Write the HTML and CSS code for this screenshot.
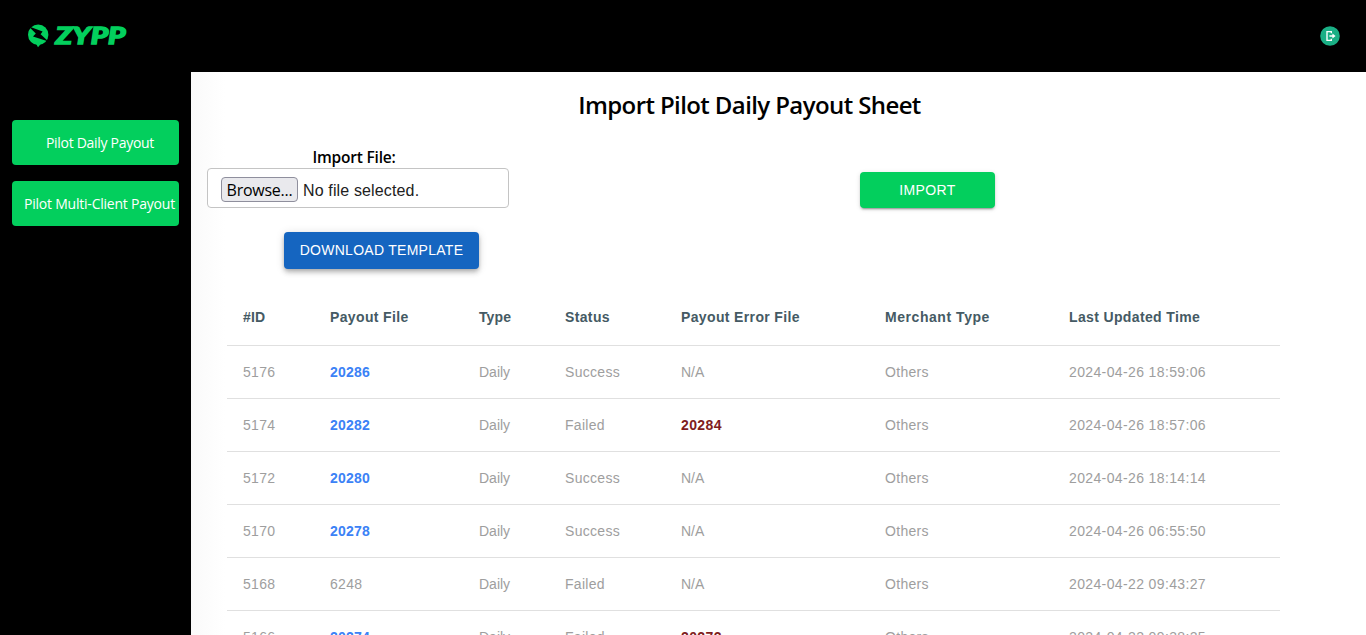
FILE: index.html
```html
<!DOCTYPE html>
<html lang="en">
<head>
<meta charset="utf-8">
<title>Import Pilot Daily Payout Sheet</title>
<link rel="stylesheet" href="styles.css">
</head>
<body>
<header class="topbar">
  <svg class="logo" width="102" height="28" viewBox="0 0 102 28" role="img" aria-label="ZYPP">
    <circle cx="11.2" cy="12.7" r="10.2" fill="#03cf5d"/>
    <path fill="#03cf5d" d="M6.5 20.5h8.5L11 25.3 9.2 22z"/>
    <path fill="#000" d="M1.5 4.2L15.6 9.4 13.6 12.2 21.5 19.6 6 14.6 8.8 11.4z"/>
    <text class="wordmark" x="28.6" y="22" textLength="70" lengthAdjust="spacingAndGlyphs">ZYPP</text>
  </svg>
  <svg class="logout" width="20" height="20" viewBox="0 0 20 20" aria-label="Log out">
    <circle cx="10" cy="10" r="9.8" fill="#1aaf85"/>
    <path d="M11.3 7.2V5.6H7v8.8h4.3v-1.6" fill="none" stroke="#fff" stroke-width="1.4"/>
    <path d="M9.4 9.3h3V7.4l3.2 2.6-3.2 2.6v-1.9h-3z" fill="#fff"/>
  </svg>
</header>
<div class="shell">
  <nav class="sidebar">
    <a class="nav-item"><span class="nav-daily">Pilot Daily Payout</span></a>
    <a class="nav-item"><span class="nav-multi">Pilot Multi-Client Payout</span></a>
  </nav>
  <main class="content">
    <h1 class="title">Import Pilot Daily Payout Sheet</h1>
    <section class="form">
      <div class="field">
        <label class="field-label">Import File:</label>
        <div class="file-input"><span class="browse">Browse...</span><span class="file-name">No file selected.</span></div>
      </div>
      <button class="btn import">IMPORT</button>
    </section>
    <button class="btn download">DOWNLOAD TEMPLATE</button>
    <table class="payouts">
      <colgroup><col class="c-id"><col class="c-file"><col class="c-type"><col class="c-status"><col class="c-error"><col class="c-merchant"><col class="c-time"></colgroup>
      <thead><tr><th class="tight">#ID</th><th>Payout File</th><th class="tight">Type</th><th>Status</th><th>Payout Error File</th><th class="wide">Merchant Type</th><th>Last Updated Time</th></tr></thead>
      <tbody>
        <tr><td>5176</td><td><a class="link">20286</a></td><td class="tight">Daily</td><td>Success</td><td class="tight">N/A</td><td>Others</td><td>2024-04-26 18:59:06</td></tr>
        <tr><td>5174</td><td><a class="link">20282</a></td><td class="tight">Daily</td><td>Failed</td><td><a class="error">20284</a></td><td>Others</td><td>2024-04-26 18:57:06</td></tr>
        <tr><td>5172</td><td><a class="link">20280</a></td><td class="tight">Daily</td><td>Success</td><td class="tight">N/A</td><td>Others</td><td>2024-04-26 18:14:14</td></tr>
        <tr><td>5170</td><td><a class="link">20278</a></td><td class="tight">Daily</td><td>Success</td><td class="tight">N/A</td><td>Others</td><td>2024-04-26 06:55:50</td></tr>
        <tr><td>5168</td><td>6248</td><td class="tight">Daily</td><td>Failed</td><td class="tight">N/A</td><td>Others</td><td>2024-04-22 09:43:27</td></tr>
        <tr><td>5166</td><td><a class="link">20274</a></td><td class="tight">Daily</td><td>Failed</td><td><a class="error">20272</a></td><td>Others</td><td>2024-04-22 09:38:25</td></tr>
      </tbody>
    </table>
  </main>
</div>
</body>
</html>
```

FILE: styles.css
```css
* { box-sizing: border-box; }
body {
  margin: 0;
  height: 635px;
  overflow: hidden;
  display: flex;
  flex-direction: column;
  background: #fff;
  font-family: "Open Sans", "Noto Sans", sans-serif;
}
.topbar {
  flex: none;
  height: 72px;
  padding: 0 26px 0 27px;
  display: flex;
  align-items: center;
  justify-content: space-between;
  background: #000;
}
.logo { overflow: visible; }
.wordmark {
  font: italic 900 22px Lato, "Open Sans", sans-serif;
  fill: #03cf5d;
  stroke: #03cf5d;
  stroke-width: 1.3px;
}
.shell { flex: 1; min-height: 0; display: flex; }
.sidebar {
  flex: none;
  width: 191px;
  padding: 48px 12px 0;
  display: flex;
  flex-direction: column;
  gap: 16px;
  background: #000;
}
.nav-item {
  height: 45px;
  display: flex;
  align-items: center;
  border-radius: 4px;
  background: #03cf5d;
  color: #fff;
  font-size: 14px;
  white-space: nowrap;
}
.nav-daily { margin-left: 34px; letter-spacing: -0.3px; }
.nav-multi { margin-left: 12px; letter-spacing: -0.22px; }
.content {
  flex: 1;
  min-width: 0;
  padding: 15px 16px 0;
  overflow: hidden;
  background: linear-gradient(90deg, #fafafa 0, #fff 34px);
}
.title {
  margin: 0;
  padding-right: 58px;
  height: 36px;
  line-height: 36px;
  text-align: center;
  font-size: 24px;
  font-weight: 600;
  letter-spacing: -0.6px;
}
.form {
  margin-top: 24px;
  display: flex;
  align-items: flex-end;
}
.field { width: 302px; }
.field-label {
  display: block;
  height: 21px;
  line-height: 20px;
  padding-right: 8px;
  text-align: center;
  font-size: 15.5px;
  font-weight: 600;
  letter-spacing: -0.2px;
}
.file-input {
  height: 40px;
  padding: 3px 13px 0;
  display: flex;
  align-items: center;
  gap: 5px;
  border: 1px solid #c4c4c4;
  border-radius: 4px;
  background: #fff;
}
.browse {
  width: 77px;
  height: 25px;
  line-height: 24px;
  text-align: center;
  border: 1px solid #8f8f9d;
  border-radius: 4px;
  background: #e9e9ed;
  color: #000;
  font-size: 16px;
  letter-spacing: -0.25px;
}
.file-name {
  padding-top: 2px;
  color: #212121;
  font: 16px "Liberation Sans", Arial, sans-serif;
  letter-spacing: 0.14px;
}
.btn {
  display: block;
  padding: 0;
  border: 0;
  border-radius: 4px;
  color: #fff;
  font: 14px/36px "Liberation Sans", Arial, sans-serif;
  letter-spacing: 0.4px;
}
.import {
  width: 135px;
  height: 36px;
  margin-left: 351px;
  background: #03cf5d;
  box-shadow: 0 3px 1px -2px rgba(0,0,0,.2), 0 2px 2px rgba(0,0,0,.14), 0 1px 5px rgba(0,0,0,.12);
}
.download {
  width: 195px;
  height: 37px;
  margin: 24px 0 0 77px;
  padding-bottom: 1px;
  letter-spacing: 0.27px;
  background: #1565c0;
  box-shadow: 0 2px 4px -1px rgba(0,0,0,.2), 0 4px 5px rgba(0,0,0,.14), 0 1px 10px rgba(0,0,0,.12);
}
.payouts {
  width: 1053px;
  margin: 20px 0 0 20px;
  table-layout: fixed;
  border-collapse: separate;
  border-spacing: 0;
  font: 14px/20px "Liberation Sans", Arial, sans-serif;
  letter-spacing: 0.3px;
}
.c-id { width: 87px; }
.c-file { width: 149px; }
.c-type { width: 86px; }
.c-status { width: 116px; }
.c-error { width: 204px; }
.c-merchant { width: 184px; }
.c-time { width: 227px; }
.payouts th,
.payouts td {
  height: 53px;
  padding: 0 16px;
  border-bottom: 1px solid #e0e0e0;
  text-align: left;
  white-space: nowrap;
  color: #9e9e9e;
}
.payouts td:last-child { letter-spacing: 0.37px; }
.payouts th { height: 57px; color: #455a64; font-weight: 700; letter-spacing: 0.36px; }
.payouts th.wide { letter-spacing: 0.55px; }
.payouts th.tight { letter-spacing: 0.1px; }
.payouts td.tight { letter-spacing: 0; }
.link { color: #3b82f6; font-weight: 700; letter-spacing: 0.2px; }
.error { color: #7f1d1d; font-weight: 700; letter-spacing: 0.4px; }
```
